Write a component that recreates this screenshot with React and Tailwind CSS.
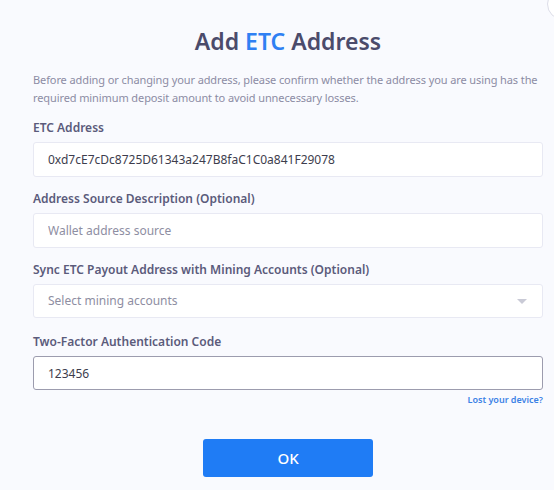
import { useState } from "react";

const FONT = { fontFamily: '"Noto Sans", "Open Sans", Arial, sans-serif' };

function Field({ label, children }) {
  return (
    <div className="flex flex-col">
      <label className="text-[12px] font-semibold text-[#5b5b7b] leading-[16px] mb-[6px]">{label}</label>
      {children}
    </div>
  );
}

export default function App() {
  const [address, setAddress] = useState("0xd7cE7cDc8725D61343a247B8faC1C0a841F29078");
  const [source, setSource] = useState("");
  const [code, setCode] = useState("123456");

  return (
    <div className="relative w-[554px] h-[490px] overflow-hidden bg-[#f9fafe]" style={FONT}>
      <div className="absolute left-[547px] top-[-12px] w-[32px] h-[32px] rounded-full border border-[#dcdde8] bg-white" />

      <div className="pl-[33px] pr-[11px] pt-[26px]">
        <h2 className="text-center text-[23px] font-semibold text-[#4b4b6b] leading-[30px]">
          Add <span className="text-[#2f80f3]">ETC</span> Address
        </h2>

        <p className="mt-[15px] text-[11px] leading-[18px] text-[#8c8ca4] tracking-[-0.1px]">
          Before adding or changing your address, please confirm whether the address you are using has the
          required minimum deposit amount to avoid unnecessary losses.
        </p>

        <div className="mt-[13px] flex flex-col gap-[14px]">
          <Field label="ETC Address">
            <input
              value={address}
              onChange={(e) => setAddress(e.target.value)}
              className="h-[35px] rounded-[3px] border border-[#e8e9f3] bg-white px-[14px] text-[12px] text-[#3d3d4d] outline-none"
            />
          </Field>

          <Field label="Address Source Description (Optional)">
            <input
              value={source}
              onChange={(e) => setSource(e.target.value)}
              placeholder="Wallet address source"
              className="h-[35px] rounded-[3px] border border-[#e8e9f3] bg-white px-[14px] text-[12px] text-[#3d3d4d] placeholder:text-[#8e8ea2] outline-none"
            />
          </Field>

          <Field label="Sync ETC Payout Address with Mining Accounts (Optional)">
            <div className="h-[34px] rounded-[3px] border border-[#e8e9f3] bg-white px-[14px] flex items-center justify-between">
              <span className="text-[12px] text-[#8e8ea2]">Select mining accounts</span>
              <svg width="10" height="5" viewBox="0 0 10 5" className="mr-[1px]">
                <path d="M0 0 L10 0 L5 5 Z" fill="#c9cad6" />
              </svg>
            </div>
          </Field>

          <div className="flex flex-col pt-[2px]">
            <Field label="Two-Factor Authentication Code">
              <input
                value={code}
                onChange={(e) => setCode(e.target.value)}
                className="h-[34px] rounded-[3px] border border-[#9c9cae] bg-white px-[14px] text-[12px] text-[#3d3d4d] outline-none"
              />
            </Field>
            <a href="#" className="self-end mt-[3px] text-[9px] font-semibold text-[#3b82e6] leading-[14px]">
              Lost your device?
            </a>
          </div>
        </div>

        <div className="mt-[32px] flex justify-center">
          <button className="w-[170px] h-[38px] rounded-[3px] bg-[#1f7cf5] text-white text-[15px] font-medium">
            OK
          </button>
        </div>
      </div>
    </div>
  );
}
